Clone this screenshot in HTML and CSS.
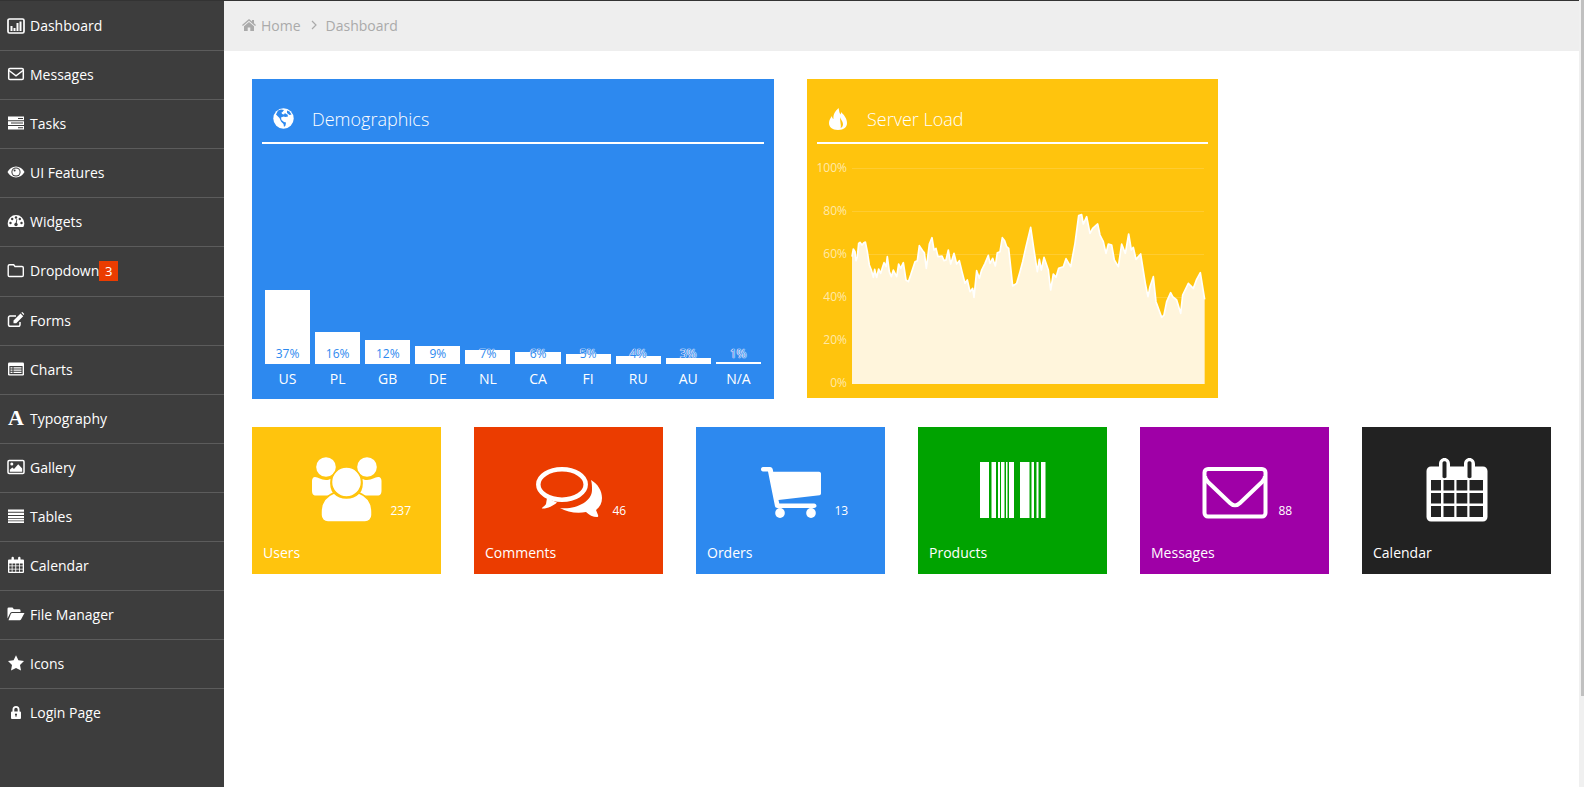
FILE: index.html
```html
<!DOCTYPE html>
<html lang="en">
<head>
    <meta charset="UTF-8">
    <title>Dashboard</title>
    <link rel="stylesheet" href="styles.css">
</head>
<body>
    <div class="app">
        <ul class="sidebar">
            <li><a href="#"><svg class="nav-icon" viewBox="0 0 18 18"><rect x="1" y="2" width="16" height="14" rx="1.5" fill="none" stroke="#fff" stroke-width="1.7"/><path fill="#fff" d="M3.5 9h2v5h-2zM6.5 11h2v3h-2zM9.500 6h2v8h-2zM12.5 4.5h2V14h-2z"/></svg>Dashboard</a></li>
            <li><a href="#"><svg class="nav-icon" viewBox="0 0 18 18"><rect x="1.7" y="3.5" width="14.6" height="11" rx="1.3" fill="none" stroke="#fff" stroke-width="1.5"/><path d="M2 5.500l7 5.300 7-5.300" fill="none" stroke="#fff" stroke-width="1.5"/></svg>Messages</a></li>
            <li><a href="#"><svg class="nav-icon" viewBox="0 0 18 18"><path fill="#fff" d="M1 2.5h16v3.700H1zM1 7.200h16v3.700H1zM1 11.900h16v3.700H1z"/><path fill="#3d3d3d" d="M11 4h5v1h-5zM4 8.600h12v1H4zM11 13.300h5v1h-5z"/></svg>Tasks</a></li>
            <li><a href="#"><svg class="nav-icon" viewBox="0 0 18 18"><path fill="#fff" d="M9 3.500c3.600 0 6.700 2.200 8.500 5.500-1.800 3.300-4.900 5.500-8.500 5.500S2.300 12.300.5 9C2.300 5.700 5.400 3.500 9 3.500z"/><circle cx="9" cy="9" r="4.600" fill="#3d3d3d"/><circle cx="9" cy="9" r="3.600" fill="#fff"/><circle cx="7.600" cy="7.600" r="1" fill="#3d3d3d"/></svg>UI Features</a></li>
            <li><a href="#"><svg class="nav-icon" viewBox="0 0 18 18"><path fill="#fff" d="M9 3a8.300 8.300 0 0 1 8.300 8.300c0 1.500-.3 2.700-1 3.700H1.700c-.7-1-1-2.200-1-3.700A8.300 8.300 0 0 1 9 3z"/><g fill="#3d3d3d"><circle cx="3.5" cy="11" r="1.200"/><circle cx="5.200" cy="7" r="1.200"/><circle cx="9" cy="5.500" r="1.200"/><circle cx="12.800" cy="7" r="1.200"/><circle cx="14.500" cy="11" r="1.200"/><circle cx="9" cy="12.500" r="1.700"/><path d="M8.500 12l1-5 .8.200-.8 5z"/></g></svg>Widgets</a></li>
            <li class="has-badge"><a href="#"><svg class="nav-icon" viewBox="0 0 18 18"><path d="M2.500 2.800h4.200l1.300 1.700h7a1.300 1.300 0 0 1 1.300 1.300v7.400a1.300 1.300 0 0 1-1.300 1.300H2.500a1.300 1.300 0 0 1-1.300-1.300V4.100a1.300 1.300 0 0 1 1.300-1.300z" fill="none" stroke="#fff" stroke-width="1.4"/></svg>Dropdown<span class="badge">3</span></a></li>
            <li><a href="#"><svg class="nav-icon" viewBox="0 0 18 18"><path d="M13 11v2.800a1.500 1.500 0 0 1-1.500 1.500H3a1.500 1.500 0 0 1-1.500-1.500V6.500A1.500 1.500 0 0 1 3 5h6" fill="none" stroke="#fff" stroke-width="1.5"/><path fill="#fff" d="M6.500 9.500L13.500 2.500l2.700 2.700-7 7H6.500zM14.300 1.700l1-.7 2 2-.7 1z"/></svg>Forms</a></li>
            <li><a href="#"><svg class="nav-icon" viewBox="0 0 18 18"><rect x="1" y="2.500" width="16" height="13" rx="1.300" fill="#fff"/><path fill="#3d3d3d" d="M2.400 6h13.200v8.200H2.400z"/><path fill="#fff" d="M3.500 7.200h2v1.200h-2zM3.500 9.500h2v1.200h-2zM3.500 11.800h2V13h-2zM6.500 7.200h8v1.200h-8zM6.500 9.500h8v1.200h-8zM6.500 11.800h8V13h-8z"/></svg>Charts</a></li>
            <li><a href="#"><span class="nav-glyph">A</span>Typography</a></li>
            <li><a href="#"><svg class="nav-icon" viewBox="0 0 18 18"><rect x="1" y="2.500" width="16" height="13" rx="1.200" fill="none" stroke="#fff" stroke-width="1.500"/><circle cx="4.800" cy="6" r="1.500" fill="#fff"/><path fill="#fff" d="M2.800 13.800v-2l2.500-2.400 1.700 1.600 4.200-4.800 4 4.200v3.400z"/></svg>Gallery</a></li>
            <li><a href="#"><svg class="nav-icon" viewBox="0 0 18 18"><path fill="#fff" d="M1 2.500h16v2.300H1zM1 5.700h16V8H1zM1 8.900h16v2.300H1zM1 12.100h16v1.500H1zM1 14.300h16v1.700H1z"/></svg>Tables</a></li>
            <li><a href="#"><svg class="nav-icon" viewBox="0 0 18 18"><path fill="#fff" fill-rule="evenodd" d="M2 3.500h2.500V2a1.200 1.200 0 0 1 2.400 0v1.500h4.200V2a1.200 1.200 0 0 1 2.400 0v1.500H16a1 1 0 0 1 1 1V16a1 1 0 0 1-1 1H2a1 1 0 0 1-1-1V4.500a1 1 0 0 1 1-1zM2.300 7.500v2h2.400v-2zM5.500 7.500v2h2.800v-2zM9.200 7.500v2H12v-2zM12.800 7.500v2h2.900v-2zM2.300 10.300v2.400h2.400v-2.400zM5.500 10.300v2.400h2.800v-2.400zM9.200 10.300v2.400H12v-2.400zM12.800 10.300v2.400h2.900v-2.400zM2.300 13.500v2.200h2.400v-2.200zM5.500 13.500v2.200h2.800v-2.200zM9.200 13.500v2.200H12v-2.200zM12.800 13.500v2.200h2.900v-2.200z"/></svg>Calendar</a></li>
            <li><a href="#"><svg class="nav-icon" viewBox="0 0 18 18"><path fill="#fff" d="M.5 13.500V3.800A1.300 1.300 0 0 1 1.800 2.500h3.700l1.400 1.700h5.300a1.300 1.300 0 0 1 1.300 1.300V7H5.200a2.500 2.500 0 0 0-2.100 1.200zM5.200 8h12.300l-3.500 6.500a1.500 1.500 0 0 1-1.300.7H1.500l2.400-6.500A1.500 1.500 0 0 1 5.200 8z"/></svg>File Manager</a></li>
            <li><a href="#"><svg class="nav-icon" viewBox="0 0 18 18"><path fill="#fff" d="M9 1.300l2.400 5 5.600.8-4 3.900 1 5.500L9 14l-5 2.500 1-5.500-4-3.900 5.600-.8z"/></svg>Icons</a></li>
            <li class="last"><a href="#"><svg class="nav-icon" viewBox="0 0 18 18"><path fill="#fff" fill-rule="evenodd" d="M5.500 8.500V6.500a3.500 3.500 0 0 1 7 0v2h.5a1 1 0 0 1 1 1V15a1 1 0 0 1-1 1H5a1 1 0 0 1-1-1V9.500a1 1 0 0 1 1-1zM7.300 8.500h3.400v-2a1.700 1.700 0 0 0-3.400 0zM9 10.500a1 1 0 0 0-.5 1.900v1.400h1v-1.400a1 1 0 0 0-.5-1.900z"/></svg>Login Page</a></li>
        </ul>

        <div class="main">
            <div class="breadcrumb">
                <svg class="crumb-icon" viewBox="0 0 14 14"><path fill="#aaa" d="M7 1l3 2.600V2h2v3.300l2 1.800-.9 1L7 2.800.9 8.100l-.9-1zM2 8.300L7 4l5 4.300V13H8.300V9.500H5.700V13H2z"/></svg>
                <span>Home</span>
                <svg class="crumb-sep" viewBox="0 0 8 10"><path d="M2 1l4 4-4 4" fill="none" stroke="#aaa" stroke-width="1.200"/></svg>
                <span>Dashboard</span>
            </div>

            <div class="content">
                <div class="panels">
                    <div class="panel panel-blue">
                        <div class="panel-head">
                            <span class="panel-icon">
                                <svg width="21" height="21" viewBox="0 0 21 21"><circle cx="10.500" cy="10.500" r="10.200" fill="#fff"/><path fill="#2d89ef" d="M5 2.500l3-1 3 .5-1.500 2-1 .5.500 1.500 2 .5 1-1.500 1 1 1.500.5.500 2-2.500.5-2-.5-2.500 1 .5 2.500 2.500 2 2 .5-.5 3-1.500 1.500-.5-3-2.500-2.500-1.500-3.500L3 6.500zM14 2.500l2.500 1 2 3-2 .5-2.500-2z"/></svg>
                            </span>
                            <h2>Demographics</h2>
                        </div>
                        <ul class="bars">
                            <li><div class="bar" style="height:74px"><span>37%</span></div><label>US</label></li>
                            <li><div class="bar" style="height:32px"><span>16%</span></div><label>PL</label></li>
                            <li><div class="bar" style="height:24px"><span>12%</span></div><label>GB</label></li>
                            <li><div class="bar" style="height:18px"><span>9%</span></div><label>DE</label></li>
                            <li><div class="bar" style="height:14px"><span>7%</span></div><label>NL</label></li>
                            <li><div class="bar" style="height:12px"><span>6%</span></div><label>CA</label></li>
                            <li><div class="bar" style="height:10px"><span>5%</span></div><label>FI</label></li>
                            <li><div class="bar" style="height:8px"><span>4%</span></div><label>RU</label></li>
                            <li><div class="bar" style="height:6px"><span>3%</span></div><label>AU</label></li>
                            <li><div class="bar" style="height:2px"><span>1%</span></div><label>N/A</label></li>
                        </ul>
                    </div>

                    <div class="panel panel-yellow">
                        <div class="panel-head">
                            <span class="panel-icon">
                                <svg width="18" height="22" viewBox="0 0 18 22"><path fill="#fff" fill-rule="evenodd" d="M9.500 0c1 3 .5 4.500 2 6.500.5-1 .5-1.500.5-2.500 3 3 6 6.500 6 11 0 4-3 7-9 7S0 19 0 15c0-3 1.500-5 3-7 0 1.500.5 2.500 1.500 3C4 6 6.500 3 9.500 0zM11 9c.5 2.500 3 4 3 7.500 0 1.500-1 3-2.500 3.500 1-2-.5-6-.5-11z"/></svg>
                            </span>
                            <h2>Server Load</h2>
                        </div>
                        <svg class="load-chart" width="391" height="250" viewBox="0 0 391 250">
                            <g class="grid">
                                <path d="M35 24.500h352M35 67.500h352M35 110.500h352M35 153.500h352M35 196.500h352"/>
                            </g>
                            <g class="axis">
                                <text x="30" y="28">100%</text>
                                <text x="30" y="71">80%</text>
                                <text x="30" y="114">60%</text>
                                <text x="30" y="157">40%</text>
                                <text x="30" y="200">20%</text>
                                <text x="30" y="243">0%</text>
                            </g>
                            <!-- traced from the load series, 3 units = 1px -->
                            <g transform="translate(-17 -74) scale(.33333)">
                                <path fill="#fff5dc" d="M156 942V560L160 537 165 545 168 572 172 560 176 520 180 517 186 525 192 518 196 516 202 545 208 585 214 600 220 622 224 598 230 622 236 597 242 610 248 590 252 578 258 590 262 560 268 605 274 620 280 600 290 620 296 582 302 595 310 578 318 630 325 635 332 615 345 575 352 572 358 527 368 542 373 548 379 595 388 522 396 503 402 540 408 535 414 560 426 558 432 572 438 570 445 540 452 582 462 550 470 582 478 572 486 605 495 640 502 630 510 665 518 655 522 682 530 602 538 625 545 600 555 580 565 556 570 580 578 565 586 588 592 548 600 545 607 503 614 512 620 530 626 535 638 648 650 640 660 605 668 575 678 530 692 472 702 540 712 605 718 568 724 600 732 562 745 600 752 660 760 612 768 622 776 595 790 590 798 566 812 590 825 520 836 437 845 434 850 462 860 440 870 490 878 475 893 462 900 495 910 515 918 550 925 522 935 525 943 570 955 590 965 522 976 550 986 492 994 540 1000 532 1008 568 1022 552 1036 640 1044 680 1050 650 1060 620 1068 695 1085 742 1092 735 1100 695 1112 668 1118 680 1130 690 1142 730 1148 675 1165 640 1180 655 1190 628 1201 608 1214 688V942z"/>
                                <path fill="none" stroke="#fff" stroke-width="5" stroke-linejoin="round" d="M156 560L160 537 165 545 168 572 172 560 176 520 180 517 186 525 192 518 196 516 202 545 208 585 214 600 220 622 224 598 230 622 236 597 242 610 248 590 252 578 258 590 262 560 268 605 274 620 280 600 290 620 296 582 302 595 310 578 318 630 325 635 332 615 345 575 352 572 358 527 368 542 373 548 379 595 388 522 396 503 402 540 408 535 414 560 426 558 432 572 438 570 445 540 452 582 462 550 470 582 478 572 486 605 495 640 502 630 510 665 518 655 522 682 530 602 538 625 545 600 555 580 565 556 570 580 578 565 586 588 592 548 600 545 607 503 614 512 620 530 626 535 638 648 650 640 660 605 668 575 678 530 692 472 702 540 712 605 718 568 724 600 732 562 745 600 752 660 760 612 768 622 776 595 790 590 798 566 812 590 825 520 836 437 845 434 850 462 860 440 870 490 878 475 893 462 900 495 910 515 918 550 925 522 935 525 943 570 955 590 965 522 976 550 986 492 994 540 1000 532 1008 568 1022 552 1036 640 1044 680 1050 650 1060 620 1068 695 1085 742 1092 735 1100 695 1112 668 1118 680 1130 690 1142 730 1148 675 1165 640 1180 655 1190 628 1201 608 1214 688"/>
                            </g>
                        </svg>
                    </div>
                </div>

                <div class="tiles">
                    <a class="tile tile-yellow" href="#">
                        <div class="tile-body">
                            <svg class="tile-icon" viewBox="0 0 80 66"><g fill="#fff"><circle cx="19" cy="10" r="9.800"/><circle cx="60" cy="10" r="9.800"/><path d="M8 20c3 0 6 3 11 3 2 0 3.500-.5 4.500-1-1 6 0 11 3 15-1 .5-2 1-3 1.500H9c-3 0-4-2-4-5V24c0-2 1-4 3-4zM71 20c-3 0-6 3-11 3-2 0-3.500-.5-4.500-1 1 6 0 11-3 15 1 .5 2 1 3 1.500h15c3 0 4-2 4-5V24c0-2-1-4-3-4z"/></g><circle cx="39.500" cy="25" r="15" fill="#fff" stroke="#ffc40d" stroke-width="1.500"/><path fill="#fff" stroke="#ffc40d" stroke-width="1.500" d="M27 36c3 3 7 5 12.500 5s9.500-2 12.500-5c8 3 13 10 13 19v3c0 4-3 7-7 7H21c-4 0-7-3-7-7v-3c0-9 5-16 13-19z"/></svg>
                            <span class="tile-num">237</span>
                        </div>
                        <div class="tile-label">Users</div>
                    </a>
                    <a class="tile tile-red" href="#">
                        <div class="tile-body">
                            <svg class="tile-icon" viewBox="0 0 80 66"><ellipse cx="33" cy="27.500" rx="23.700" ry="15.200" fill="none" stroke="#fff" stroke-width="4.500"/><path fill="#fff" d="M18 41l-1 6c-1 2-5 4-4 4.500 5 .5 11-2.500 15-6z"/><path fill="#fff" d="M62 23c7 4 11 11 11 18 0 5-2 9-6 12l2 5c.5 1.500 0 2-1 2-4 0-8-2-11-5-9 2-19 0-26-4 15 2 32-6 32-18 0-3 0-7-1-10z"/></svg>
                            <span class="tile-num">46</span>
                        </div>
                        <div class="tile-label">Comments</div>
                    </a>
                    <a class="tile tile-blue" href="#">
                        <div class="tile-body">
                            <svg class="tile-icon" viewBox="0 0 80 66"><g fill="#fff"><path d="M12 10h7c1.500 0 2.500 1 2.800 2.500l.4 2.200H68c1.500 0 2 1 2 2v19.500c0 1-.5 1.800-1.500 2L27.500 43l.8 3.500H63c1.500 0 2.500 1 2.500 2.300s-1 2.200-2.500 2.200H26.500c-1.500 0-2.300-1-2.600-2.300L17 14.500h-5c-1.300 0-2-.9-2-2.200s.7-2.300 2-2.300z"/><ellipse cx="29" cy="56" rx="4.800" ry="5"/><ellipse cx="60" cy="56" rx="4.800" ry="5"/></g></svg>
                            <span class="tile-num">13</span>
                        </div>
                        <div class="tile-label">Orders</div>
                    </a>
                    <a class="tile tile-green" href="#">
                        <div class="tile-body">
                            <svg class="tile-icon" viewBox="0 0 80 66"><path fill="#fff" d="M7 5h9v56H7zM18.500 5H23v56h-4.500zM25 5h2v56h-2zM28 5h3.500v56H28zM33 5h1.500v56H33zM36 5h5v56h-5zM47 5h9.500v56H47zM58.500 5H61v56h-2.500zM63.500 5h2v56h-2zM68 5h4.500v56H68z"/></svg>
                        </div>
                        <div class="tile-label">Products</div>
                    </a>
                    <a class="tile tile-magenta" href="#">
                        <div class="tile-body">
                            <svg class="tile-icon" viewBox="0 0 80 66"><rect x="9.500" y="12" width="61" height="47.500" rx="3.500" fill="none" stroke="#fff" stroke-width="4"/><path d="M10 19c0 3 1 4 3 6l22 21c3 3 7 3 10 0l22-21c2-2 3-3 3-6" fill="none" stroke="#fff" stroke-width="4"/></svg>
                            <span class="tile-num">88</span>
                        </div>
                        <div class="tile-label">Messages</div>
                    </a>
                    <a class="tile tile-dark" href="#">
                        <div class="tile-body">
                            <svg class="tile-icon" viewBox="0 0 80 66"><path fill="#fff" fill-rule="evenodd" d="M14 9.500h8V7c0-3.500 2.500-6 5.500-6S33 3.500 33 7v2.500h14V7c0-3.500 2.500-6 5.500-6S58 3.500 58 7v2.500h8c2.500 0 4.500 2 4.500 4.500v46c0 2.500-2 4.500-4.500 4.500H14c-2.500 0-4.500-2-4.500-4.500V14c0-2.500 2-4.500 4.500-4.500zM25.500 6v14c0 1.500 4 1.500 4 0V6c0-2.500-4-2.500-4 0zM50.500 6v14c0 1.500 4 1.500 4 0V6c0-2.500-4-2.500-4 0zM14 23v10.500h10V23zM26.500 23v10.500h10.800V23zM39.500 23v10.500h10.800V23zM52.500 23v10.500H66V23zM14 36v10.500h10V36zM26.500 36v10.500h10.800V36zM39.500 36v10.500h10.800V36zM52.500 36v10.500H66V36zM14 49v11h10V49zM26.500 49v11h10.800V49zM39.500 49v11h10.800V49zM52.500 49v11H66V49z"/></svg>
                        </div>
                        <div class="tile-label">Calendar</div>
                    </a>
                </div>
            </div>
        </div>

        <div class="scrollbar"><div class="scrollbar-thumb"></div></div>
    </div>
</body>
</html>
```

FILE: styles.css
```css
* {
    box-sizing: border-box;
}
body {
    margin: 0;
    font-family: "Open Sans", "Liberation Sans", sans-serif;
    font-size: 14px;
    background-color: #fff;
    color: #fff;
}
a {
    color: inherit;
    text-decoration: none;
}
ul {
    list-style: none;
    margin: 0;
    padding: 0;
}

.app {
    display: flex;
    height: 787px;
    overflow: hidden;
}

/* sidebar */
.sidebar {
    width: 224px;
    flex-shrink: 0;
    background-color: #3d3d3d;
    border-top: 1px solid #333;
}
.sidebar li {
    border-bottom: 1px solid #5c5c5c;
}
.sidebar li.last {
    border-bottom: none;
}
.sidebar a {
    display: flex;
    align-items: center;
    height: 48px;
    padding: 0 0 2px 7px;
}
.sidebar li:first-child a {
    height: 49px;
    padding-bottom: 0;
}
.sidebar li.has-badge a {
    height: 49px;
}
.nav-icon {
    width: 18px;
    height: 18px;
    margin-right: 5px;
    flex-shrink: 0;
}
.nav-glyph {
    width: 18px;
    margin-right: 5px;
    text-align: center;
    font-family: "Liberation Serif", serif;
    font-weight: bold;
    font-size: 22px;
    line-height: 18px;
}
.badge {
    display: inline-block;
    width: 19px;
    height: 20px;
    line-height: 20px;
    text-align: center;
    background-color: #eb3c00;
    font-size: 13px;
}

/* main column */
.main {
    flex: 1;
    min-width: 0;
}
.breadcrumb {
    display: flex;
    align-items: center;
    height: 51px;
    padding: 0 0 2px 18px;
    background-color: #eee;
    border-top: 1px solid #333;
    color: #aaa;
}
.crumb-icon {
    width: 14px;
    height: 14px;
    margin-right: 5px;
}
.crumb-sep {
    width: 8px;
    height: 10px;
    margin: 0 8px 0 9px;
}
.content {
    padding: 28px 0 0 28px;
}

/* panels */
.panels {
    display: flex;
    align-items: flex-start;
    gap: 33px;
}
.panel {
    padding: 0 10px;
}
.panel-blue {
    width: 522px;
    height: 320px;
    background-color: #2d89ef;
}
.panel-yellow {
    width: 411px;
    height: 319px;
    background-color: #ffc40d;
}
.panel-head {
    display: flex;
    align-items: center;
    height: 65px;
    padding-top: 16px;
    border-bottom: 2px solid #fff;
}
.panel-icon {
    display: flex;
    justify-content: center;
    width: 42px;
    margin-right: 8px;
}
.panel-head h2 {
    margin: 0;
    font-size: 18px;
    font-weight: 300;
}

/* demographics bars */
.bars {
    display: flex;
    gap: 5px;
    padding: 0 3px;
}
.bars li {
    width: 45.1px;
    height: 254px;
    display: flex;
    flex-direction: column;
    justify-content: flex-end;
    text-align: center;
}
.bar {
    position: relative;
    background-color: #fff;
}
.bar span {
    position: absolute;
    left: 0;
    right: 0;
    bottom: 2px;
    font-size: 12px;
    line-height: 16px;
    color: #2d89ef;
    text-shadow: 0 0 1px #fff, 0 0 1px #fff, 0 0 1px #fff, 0 0 1px #fff;
}
.bars label {
    height: 34px;
    line-height: 30px;
    flex-shrink: 0;
}

/* server load chart */
.load-chart {
    display: block;
}
.grid path {
    stroke: rgba(255, 255, 255, 0.15);
    stroke-width: 1;
    fill: none;
}
.axis text {
    font-size: 12px;
    fill: rgba(255, 255, 255, 0.65);
    text-anchor: end;
}

/* tiles */
.tiles {
    display: flex;
    gap: 33px;
    margin-top: 28px;
}
.tile {
    display: block;
    width: 189px;
    height: 147px;
    padding-top: 30px;
}
.tile-yellow { background-color: #ffc40d; }
.tile-red { background-color: #eb3c00; }
.tile-blue { background-color: #2d89ef; }
.tile-green { background-color: #00a300; }
.tile-magenta { background-color: #9f00a7; }
.tile-dark { background-color: #222; }
.tile-body {
    display: grid;
    grid-template-columns: 1fr 80px 1fr;
    height: 66px;
}
.tile-icon {
    grid-column: 2;
    width: 80px;
    height: 66px;
}
.tile-num {
    grid-column: 3;
    align-self: end;
    margin: 0 0 4px 4px;
    font-size: 12px;
    font-weight: 500;
    line-height: 17px;
}
.tile-label {
    margin-top: 20px;
    padding-left: 11px;
    line-height: 20px;
}

/* fake page scrollbar */
.scrollbar {
    width: 5px;
    flex-shrink: 0;
    background-color: #f0f0f0;
}
.scrollbar-thumb {
    width: 3px;
    height: 696px;
    margin-left: 2px;
    background-color: #c0c0c0;
}
```
